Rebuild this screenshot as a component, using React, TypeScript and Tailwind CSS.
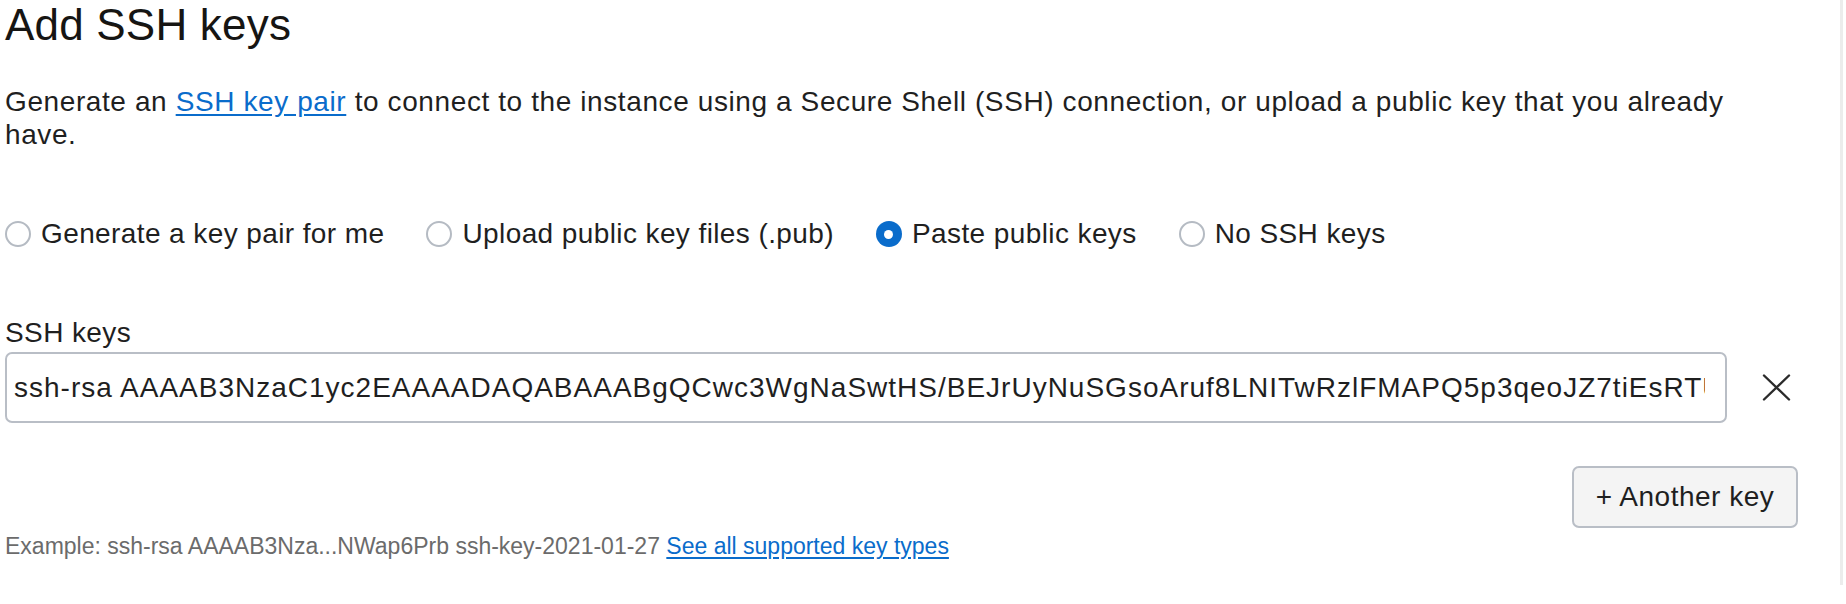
import { useState } from 'react'

const KEY_OPTIONS = [
  { id: 'generate', label: 'Generate a key pair for me' },
  { id: 'upload', label: 'Upload public key files (.pub)' },
  { id: 'paste', label: 'Paste public keys' },
  { id: 'none', label: 'No SSH keys' },
]

const SAMPLE_KEY =
  'ssh-rsa AAAAB3NzaC1yc2EAAAADAQABAAABgQCwc3WgNaSwtHS/BEJrUyNuSGsoAruf8LNITwRzlFMAPQ5p3qeoJZ7tiEsRTUCkL9xQw2Vb7mPzR4tYhN0aKdE8sFgJ3uW5oXiZ1cT6vB user@host'

function Radio({ checked, label, onClick }: { checked: boolean; label: string; onClick: () => void }) {
  return (
    <button type="button" onClick={onClick} className="flex items-center gap-[10px]">
      {checked ? (
        <span className="w-[26px] h-[26px] rounded-full bg-[#0a6ccb] flex items-center justify-center">
          <span className="w-[9px] h-[9px] rounded-full bg-white" />
        </span>
      ) : (
        <span className="w-[26px] h-[26px] rounded-full border-2 border-[#b5bbc3] bg-white" />
      )}
      <span className="text-[28px] leading-[32px] tracking-[0.4px] text-[#1f1f1f]">{label}</span>
    </button>
  )
}

export default function App() {
  const [mode, setMode] = useState('paste')
  const [key, setKey] = useState(SAMPLE_KEY)

  return (
    <div className="relative w-[1846px] h-[604px] bg-white overflow-hidden"
      style={{ fontFamily: '"Liberation Sans", Arial, Helvetica, sans-serif' }}>
      <div className="w-[1798px] pl-[5px] flex flex-col">
        <h1 className="text-[44px] leading-[50px] tracking-[0.2px] font-normal text-[#161513]">Add SSH keys</h1>

        <p className="mt-[35px] max-w-[1740px] text-[28px] leading-[33px] tracking-[0.6px] text-[#1f1f1f]">
          Generate an{' '}
          <a href="#" className="text-[#0a6ccb] underline underline-offset-[3px]">SSH key pair</a>
          {' '}to connect to the instance using a Secure Shell (SSH) connection, or upload a public key that you already have.
        </p>

        {/* ── key source ── */}
        <div className="mt-[67px] flex items-center gap-[42px]">
          {KEY_OPTIONS.map(o => (
            <Radio key={o.id} checked={mode === o.id} label={o.label} onClick={() => setMode(o.id)} />
          ))}
        </div>

        <label className="mt-[67px] text-[28px] leading-[32px] tracking-[0.4px] text-[#1f1f1f]">SSH keys</label>

        <div className="mt-[3px] flex items-center">
          <input
            value={key}
            onChange={e => setKey(e.target.value)}
            className="flex-1 min-w-0 h-[71px] pl-[7px] pr-[20px] rounded-[7px] border-2 border-[#b9bec6] text-[28px] tracking-[1px] text-[#1f1f1f] outline-none bg-white"
          />
          <button type="button" className="ml-[35px] mr-[7px] w-[29px] h-[29px] flex items-center justify-center text-[#2b2b2b]" title="Remove">
            <svg className="w-[29px] h-[27px]" viewBox="0 0 29 27" fill="none" stroke="currentColor" strokeWidth={2.4} strokeLinecap="round">
              <path d="M2 1.5 27 25.5M27 1.5 2 25.5" />
            </svg>
          </button>
        </div>

        <div className="mt-[43px] flex justify-end">
          <button
            type="button"
            className="h-[62px] w-[226px] rounded-[7px] border-2 border-[#b9bec6] bg-[#f4f4f4] text-[28px] tracking-[0.5px] text-[#1f1f1f]"
          >
            + Another key
          </button>
        </div>

        <p className="mt-[4px] text-[23px] leading-[28px] text-[#6b6b6b]">
          Example: ssh-rsa AAAAB3Nza...NWap6Prb ssh-key-2021-01-27{' '}
          <a href="#" className="text-[#0a6ccb] underline underline-offset-[3px]">See all supported key types</a>
        </p>
      </div>

      {/* panel edge */}
      <div className="absolute top-0 left-[1840px] w-[3px] h-[585px] bg-[#ececec]" />
    </div>
  )
}
